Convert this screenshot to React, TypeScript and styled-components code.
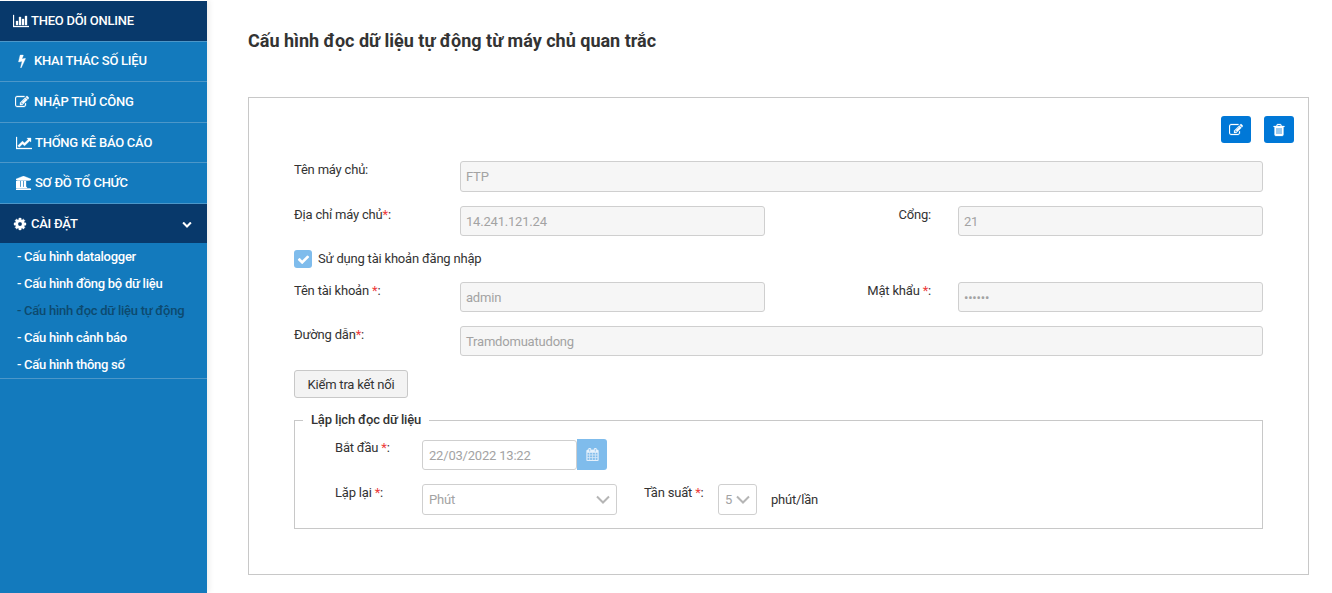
import styled, { createGlobalStyle } from "styled-components"
import type { ReactNode } from "react"

const GlobalStyle = createGlobalStyle`
  html, body {
    margin: 0;
    padding: 0;
    background: #fff;
    overflow: hidden;
  }
  * { box-sizing: border-box; }
  body {
    font-family: Roboto, "Liberation Sans", sans-serif;
    font-size: 13px;
    letter-spacing: -0.2px;
    color: #333;
  }
`

// font-awesome 4 glyphs, the package only has the newer thinner ones
const glyphs = {
  barChart: { w: 2048, d: "M640 896v512h-256v-512h256zm384-512v1024h-256v-1024h256zm1024 1152v128h-2048v-1536h128v1408h1920zm-640-896v768h-256v-768h256zm384-384v1152h-256v-1152h256z" },
  bolt: { w: 1792, d: "M1333 566q18 20 7 44l-540 1157q-13 25-42 25-4 0-14-2-17-5-25.5-19t-4.5-30l197-808-406 101q-4 1-12 1-18 0-31-11-18-15-13-39l201-825q4-14 16-23t28-9h328q19 0 32 12.5t13 29.5q0 8-5 18l-171 463 396-98q8-2 12-2 19 0 34 15z" },
  edit: { w: 1792, d: "M888 1184l116-116-152-152-116 116v56h96v96h56zm440-720q-16-16-33 1l-350 350q-17 17-1 33t33-1l350-350q17-17 1-33zm80 594v190q0 119-84.5 203.5t-203.5 84.5h-832q-119 0-203.5-84.5t-84.5-203.5v-832q0-119 84.5-203.5t203.5-84.5h832q63 0 117 25 15 7 18 23 3 17-9 29l-49 49q-14 14-32 8-23-6-45-6h-832q-66 0-113 47t-47 113v832q0 66 47 113t113 47h832q66 0 113-47t47-113v-126q0-13 9-22l64-64q15-15 35-7t20 29zm-96-738l288 288-672 672h-288v-288zm444 132l-92 92-288-288 92-92q28-28 68-28t68 28l152 152q28 28 28 68t-28 68z" },
  lineChart: { w: 2048, d: "M2048 1536v128h-2048v-1536h128v1408h1920zm-128-1248v435q0 21-19.5 29.5t-35.5-7.5l-121-121-633 633q-10 10-23 10t-23-10l-233-233-416 416-192-192 585-585q10-10 23-10t23 10l233 233 464-464-121-121q-16-16-7.5-35.5t29.5-19.5h435q14 0 23 9t9 23z" },
  bank: { w: 1920, d: "M960 0l960 384v128h-128q0 26-20.5 45t-48.5 19h-1526q-28 0-48.5-19t-20.5-45h-128v-128zm-704 640h256v768h128v-768h256v768h128v-768h256v768h59q28 0 48.5 19t20.5 45v64h-1664v-64q0-26 20.5-45t48.5-19h59v-768zm1595 960q28 0 48.5 19t20.5 45v128h-1920v-128q0-26 20.5-45t48.5-19h1782z" },
  cog: { w: 1792, d: "M1152 896q0-106-75-181t-181-75-181 75-75 181 75 181 181 75 181-75 75-181zm512-109v222q0 12-8 23t-20 13l-185 28q-19 54-39 91 35 50 107 138 10 12 10 25t-9 23q-27 37-99 108t-94 71q-12 0-26-9l-138-108q-44 23-91 38-16 136-29 186-7 28-36 28h-222q-14 0-24.5-8.5t-11.5-21.5l-28-184q-49-16-90-37l-141 107q-10 9-25 9-14 0-25-11-126-114-165-168-7-10-7-23 0-12 8-23 15-21 51-66.5t54-70.5q-27-50-41-99l-183-27q-13-2-21-12.5t-8-23.5v-222q0-12 8-23t19-13l186-28q14-46 39-92-40-57-107-138-10-12-10-24 0-10 9-23 26-36 98.5-107.5t94.5-71.5q13 0 26 10l138 107q44-23 91-38 16-136 29-186 7-28 36-28h222q14 0 24.5 8.5t11.5 21.5l28 184q49 16 90 37l142-107q9-9 24-9 13 0 25 10 129 119 165 170 7 8 7 22 0 12-8 23-15 21-51 66.5t-54 70.5q26 50 41 98l183 28q13 2 21 12.5t8 23.5z" },
  chevron: { w: 1792, d: "M1683 808l-742 741q-19 19-45 19t-45-19l-742-741q-19-19-19-45.5t19-45.5l166-166q19-19 45-19t45 19l531 531 531-531q19-19 45-19t45 19l166 166q19 19 19 45.5t-19 45.5z" },
  trash: { w: 1792, d: "M704 1376v-704q0-14-9-23t-23-9h-64q-14 0-23 9t-9 23v704q0 14 9 23t23 9h64q14 0 23-9t9-23zm256 0v-704q0-14-9-23t-23-9h-64q-14 0-23 9t-9 23v704q0 14 9 23t23 9h64q14 0 23-9t9-23zm256 0v-704q0-14-9-23t-23-9h-64q-14 0-23 9t-9 23v704q0 14 9 23t23 9h64q14 0 23-9t9-23zm-544-992h448l-48-117q-7-9-17-11h-317q-10 2-17 11zm928 32v64q0 14-9 23t-23 9h-96v948q0 83-47 143.5t-113 60.5h-832q-66 0-113-58.5t-47-141.5v-952h-96q-14 0-23-9t-9-23v-64q0-14 9-23t23-9h309l70-167q15-37 54-63t79-26h320q40 0 79 26t54 63l70 167h309q14 0 23 9t9 23z" },
  calendar: { w: 1792, d: "M192 1664h288v-288h-288v288zm352 0h320v-288h-320v288zm-352-352h288v-320h-288v320zm352 0h320v-320h-320v320zm-352-384h288v-288h-288v288zm736 736h320v-288h-320v288zm-384-736h320v-288h-320v288zm768 736h288v-288h-288v288zm-384-352h320v-320h-320v320zm-352-864v-288q0-13-9.5-22.5t-22.5-9.5h-64q-13 0-22.5 9.5t-9.5 22.5v288q0 13 9.5 22.5t22.5 9.5h64q13 0 22.5-9.5t9.5-22.5zm736 864h288v-320h-288v320zm-384-384h320v-288h-320v288zm384 0h288v-288h-288v288zm32-480v-288q0-13-9.5-22.5t-22.5-9.5h-64q-13 0-22.5 9.5t-9.5 22.5v288q0 13 9.5 22.5t22.5 9.5h64q13 0 22.5-9.5t9.5-22.5zm384-64v1280q0 52-38 90t-90 38h-1408q-52 0-90-38t-38-90v-1280q0-52 38-90t90-38h128v-96q0-66 47-113t113-47h64q66 0 113 47t47 113v96h384v-96q0-66 47-113t113-47h64q66 0 113 47t47 113v96h128q52 0 90 38t38 90z" },
  check: { w: 1792, d: "M1671 566q0 40-28 68l-724 724-136 136q-28 28-68 28t-68-28l-136-136-362-362q-28-28-28-68t28-68l136-136q28-28 68-28t68 28l294 295 656-657q28-28 68-28t68 28l136 136q28 28 28 68z" },
}

type GlyphName = keyof typeof glyphs

const Glyph = ({ name, size = 14 }: { name: GlyphName; size?: number }) => {
  const { w, d } = glyphs[name]
  return (
    <svg width={(w / 1792) * size} height={size} viewBox={`0 0 ${w} 1792`} fill="currentColor">
      <path d={d} />
    </svg>
  )
}

const Page = styled.div`
  display: flex;
  width: 1332px;
  height: 593px;
`

const Sidebar = styled.nav`
  width: 207px;
  flex-shrink: 0;
  background: #137abd;
  border-top: 1px solid #fff;
  box-shadow: 2px 0 6px rgba(0, 0, 0, 0.08);
  color: #fff;
`

const MenuItem = styled.div<{ $active?: boolean; $open?: boolean; $indent?: number; $height: number; $lift?: number }>`
  height: ${({ $height }) => $height}px;
  display: flex;
  align-items: center;
  padding-left: ${({ $indent }) => $indent ?? 16}px;
  padding-right: 15px;
  padding-bottom: ${({ $lift }) => $lift ?? 0}px;
  font-size: 13px;
  font-weight: 500;
  letter-spacing: -0.25px;
  background: ${({ $active }) => ($active ? "#08396b" : "transparent")};
  border-bottom: ${({ $open }) => ($open ? "none" : "1px solid #4c97c9")};
`

const MenuIcon = styled.span<{ $width: number }>`
  width: ${({ $width }) => $width}px;
  display: inline-flex;
  align-items: center;

  svg {
    stroke: currentColor;
    stroke-width: 40;
  }
`

const MenuArrow = styled.span`
  margin-left: auto;
  display: inline-flex;
`

const SubMenu = styled.div`
  padding: 0 0 0 17px;
  height: 136px;
  border-bottom: 1px solid #4c97c9;
`

const SubItem = styled.div<{ $current?: boolean }>`
  height: 27px;
  line-height: 27px;
  font-size: 13px;
  font-weight: 500;
  letter-spacing: -0.27px;
  color: ${({ $current }) => ($current ? "#0d4a6f" : "#fff")};
`

const Main = styled.main`
  flex: 1;
  padding: 30px 23px 0 41px;
`

const Title = styled.h1`
  margin: 0 0 45px;
  height: 22px;
  line-height: 22px;
  font-size: 18px;
  font-weight: 700;
  letter-spacing: 0;
  color: #333;
`

const Card = styled.section`
  height: 478px;
  border: 1px solid #c8c8c8;
  padding: 18px 14px 0 45px;
`

const Toolbar = styled.div`
  display: flex;
  justify-content: flex-end;
  gap: 13px;
  height: 27px;
  margin-bottom: 18px;
`

const IconButton = styled.button`
  width: 30px;
  height: 27px;
  padding: 0;
  border: none;
  border-radius: 3px;
  background: #0078d7;
  color: #fff;
  display: flex;
  align-items: center;
  justify-content: center;

  svg {
    stroke: currentColor;
    stroke-width: 30;
  }
`

const Form = styled.div`
  width: 969px;
`

const Row = styled.div<{ $height: number }>`
  display: flex;
  height: ${({ $height }) => $height}px;
  margin-bottom: 14px;
`

const Label = styled.label<{ $width?: number; $align?: string }>`
  width: ${({ $width }) => $width ?? 166}px;
  flex-shrink: 0;
  padding-top: 1px;
  line-height: 16px;
  font-size: 13px;
  color: #333;
  text-align: ${({ $align }) => $align ?? "left"};
`

const Star = styled.span`
  color: #ee3a3a;
`

const Input = styled.div<{ $width?: number; $white?: boolean }>`
  width: ${({ $width }) => ($width ? `${$width}px` : "auto")};
  flex: ${({ $width }) => ($width ? "none" : 1)};
  height: 100%;
  padding-left: ${({ $white }) => ($white ? 6 : 5)}px;
  display: flex;
  align-items: center;
  font-size: 13px;
  color: #a3a3a3;
  background: ${({ $white }) => ($white ? "#fff" : "#f6f6f6")};
  border: 1px solid #cfcfcf;
  border-radius: 3px;
`

const Spacer = styled.div<{ $width: number }>`
  width: ${({ $width }) => $width}px;
  flex-shrink: 0;
`

const CheckRow = styled.div`
  display: flex;
  align-items: center;
  gap: 6px;
  height: 18px;
  margin-bottom: 14px;
`

const CheckText = styled.span`
  padding-bottom: 2px;
  font-size: 13px;
`

const CheckBox = styled.span`
  width: 18px;
  height: 18px;
  border-radius: 3px;
  background: #7fbcec;
  color: #fff;
  display: flex;
  align-items: center;
  justify-content: center;
`

const TestButton = styled.button`
  display: block;
  width: 114px;
  height: 28px;
  padding: 0;
  border: 1px solid #c8c8c8;
  border-radius: 3px;
  background: #f3f3f3;
  color: #333;
  font-family: inherit;
  font-size: 13px;
  letter-spacing: inherit;
`

const Schedule = styled.fieldset`
  margin: 14px 0 0;
  height: 117px;
  padding: 12px 0 0 8px;
  border: 1px solid #c8c8c8;
`

const Legend = styled.legend`
  padding: 0 8px;
  font-size: 13px;
  font-weight: 500;
  line-height: 16px;
  letter-spacing: -0.15px;
  color: #333;
`

const ScheduleBody = styled.div`
  padding-left: 32px;
`

const ScheduleRow = styled.div<{ $height: number; $gap?: number }>`
  display: flex;
  height: ${({ $height }) => $height}px;
  margin-bottom: ${({ $gap }) => $gap ?? 0}px;
`

const ScheduleLabel = styled(Label)`
  padding-top: 0;
`

const CalendarButton = styled.span`
  width: 30px;
  height: 31px;
  margin-top: -1px;
  border-radius: 0 3px 3px 0;
  background: #7fbcec;
  color: #e6f2fc;
  display: flex;
  align-items: center;
  justify-content: center;

  svg {
    stroke: currentColor;
    stroke-width: 30;
  }
`

const Select = styled(Input)`
  padding-right: 6px;
  justify-content: space-between;
`

const Unit = styled.span`
  margin-left: 14px;
  padding-top: 8px;
  line-height: 16px;
  font-size: 13px;
  color: #333;
`

const Chevron = () => (
  <svg width="14" height="9" viewBox="0 0 14 9" fill="none">
    <path d="M1 1.5 7 7.5 13 1.5" stroke="#b5b5b5" strokeWidth="2" />
  </svg>
)

type NavProps = {
  icon: GlyphName
  iconWidth: number
  height: number
  indent?: number
  lift?: number
  active?: boolean
  children: ReactNode
}

const Nav = ({ icon, iconWidth, height, indent, lift, active, children }: NavProps) => (
  <MenuItem $active={active} $indent={indent} $height={height} $lift={lift}>
    <MenuIcon $width={iconWidth}><Glyph name={icon} /></MenuIcon>
    {children}
  </MenuItem>
)

export default function App() {
  return (
    <Page>
      <GlobalStyle />
      <Sidebar>
        <Nav icon="barChart" iconWidth={18} indent={13} height={41} lift={1} active>THEO DÕI ONLINE</Nav>
        <Nav icon="bolt" iconWidth={19} indent={15} height={40} lift={2}>KHAI THÁC SỐ LIỆU</Nav>
        <Nav icon="edit" iconWidth={19} indent={15} height={41} lift={1}>NHẬP THỦ CÔNG</Nav>
        <Nav icon="lineChart" iconWidth={19} indent={16} height={40}>THỐNG KÊ BÁO CÁO</Nav>
        <Nav icon="bank" iconWidth={19} indent={16} height={41} lift={1}>SƠ ĐỒ TỔ CHỨC</Nav>
        <MenuItem $active $open $indent={13} $height={39}>
          <MenuIcon $width={18}><Glyph name="cog" /></MenuIcon>
          CÀI ĐẶT
          <MenuArrow><Glyph name="chevron" size={10} /></MenuArrow>
        </MenuItem>
        <SubMenu>
          <SubItem>- Cấu hình datalogger</SubItem>
          <SubItem>- Cấu hình đồng bộ dữ liệu</SubItem>
          <SubItem $current>- Cấu hình đọc dữ liệu tự động</SubItem>
          <SubItem>- Cấu hình cảnh báo</SubItem>
          <SubItem>- Cấu hình thông số</SubItem>
        </SubMenu>
      </Sidebar>
      <Main>
        <Title>Cấu hình đọc dữ liệu tự động từ máy chủ quan trắc</Title>
        <Card>
          <Toolbar>
            <IconButton><Glyph name="edit" /></IconButton>
            <IconButton><Glyph name="trash" /></IconButton>
          </Toolbar>
          <Form>
            <Row $height={31}>
              <Label>Tên máy chủ:</Label>
              <Input>FTP</Input>
            </Row>
            <Row $height={30}>
              <Label>Địa chỉ máy chủ<Star>*</Star>:</Label>
              <Input $width={305}>14.241.121.24</Input>
              <Label $width={166} $align="right">Cổng:</Label>
              <Spacer $width={27} />
              <Input>21</Input>
            </Row>
            <CheckRow>
              <CheckBox><Glyph name="check" size={13} /></CheckBox>
              <CheckText>Sử dụng tài khoản đăng nhập</CheckText>
            </CheckRow>
            <Row $height={30}>
              <Label>Tên tài khoản <Star>*</Star>:</Label>
              <Input $width={305}>admin</Input>
              <Label $width={166} $align="right">Mật khẩu <Star>*</Star>:</Label>
              <Spacer $width={27} />
              <Input>••••••</Input>
            </Row>
            <Row $height={30}>
              <Label>Đường dẫn<Star>*</Star>:</Label>
              <Input>Tramdomuatudong</Input>
            </Row>
            <TestButton>Kiểm tra kết nối</TestButton>
            <Schedule>
              <Legend>Lập lịch đọc dữ liệu</Legend>
              <ScheduleBody>
                <ScheduleRow $height={30} $gap={14}>
                  <ScheduleLabel $width={87}>Bắt đầu <Star>*</Star>:</ScheduleLabel>
                  <Input $width={155} $white>22/03/2022 13:22</Input>
                  <CalendarButton><Glyph name="calendar" size={13} /></CalendarButton>
                </ScheduleRow>
                <ScheduleRow $height={31}>
                  <Label $width={87}>Lặp lại <Star>*</Star>:</Label>
                  <Select $width={195} $white>Phút<Chevron /></Select>
                  <Spacer $width={27} />
                  <Label $width={74}>Tần suất <Star>*</Star>:</Label>
                  <Select $width={39} $white>5<Chevron /></Select>
                  <Unit>phút/lần</Unit>
                </ScheduleRow>
              </ScheduleBody>
            </Schedule>
          </Form>
        </Card>
      </Main>
    </Page>
  )
}
